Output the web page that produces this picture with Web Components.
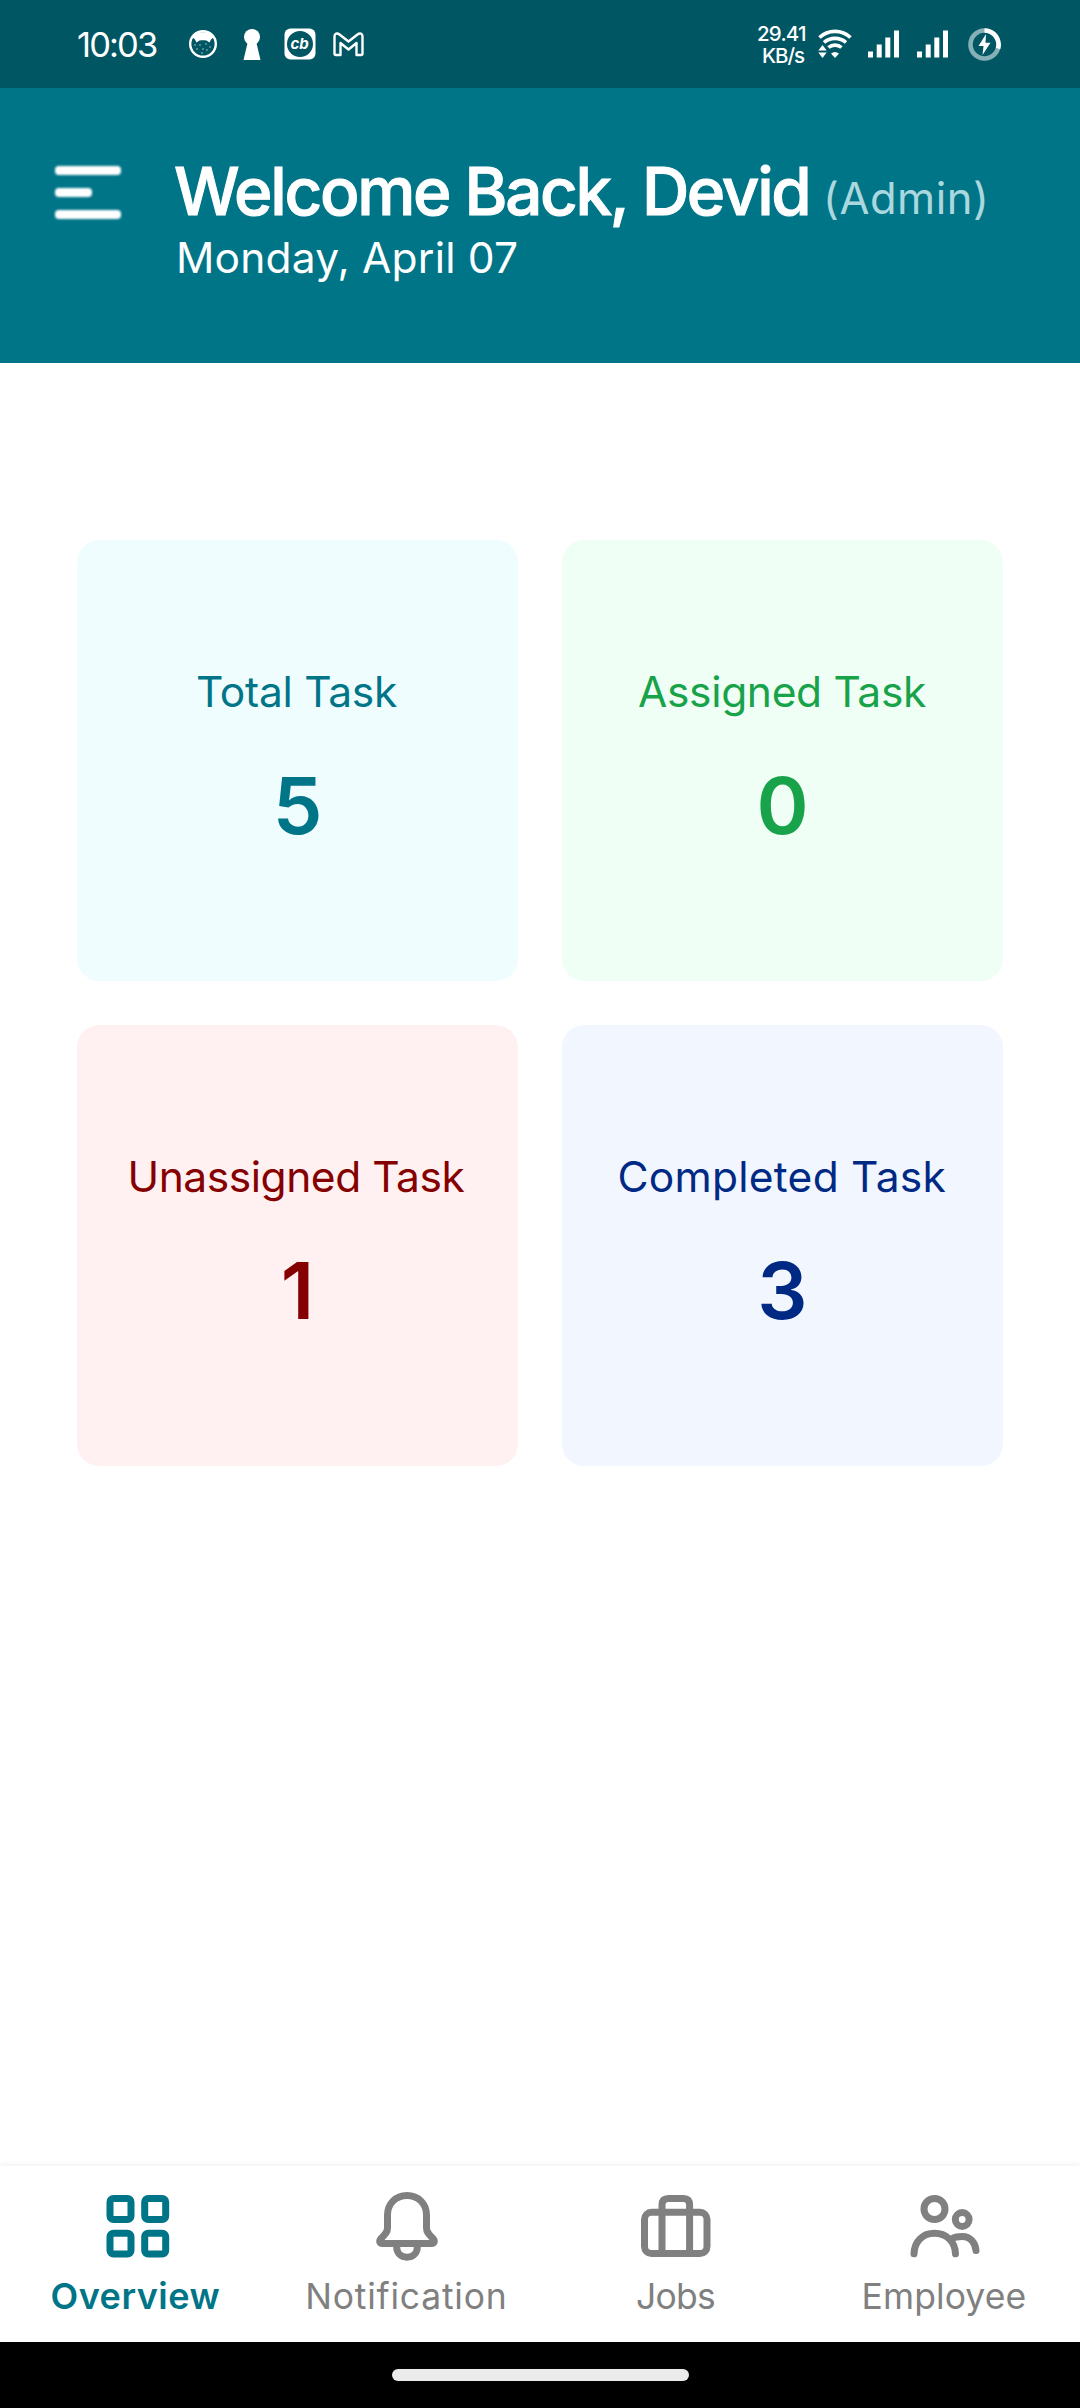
<!DOCTYPE html>
<html lang="en">
<head>
<meta charset="utf-8">
<title>Overview</title>
<style>
  html, body { margin: 0; background: #fff; font-family: Inter, "Open Sans", sans-serif; }
</style>
</head>
<body>
<app-screen>
  <status-bar slot="status"></status-bar>
  <welcome-header slot="header" name="Devid" role-name="(Admin)" date="Monday, April 07"></welcome-header>
  <task-card label="Total Task" ink="199" value="5" style="--bg:#f0fdff;--fg:#007588"></task-card>
  <task-card label="Assigned Task" ink="287" value="0" style="--bg:#f0fff5;--fg:#18a34b"></task-card>
  <task-card label="Unassigned Task" ink="334" value="1" style="--bg:#fff1f2;--fg:#850000"></task-card>
  <task-card label="Completed Task" ink="326" value="3" style="--bg:#f1f6ff;--fg:#002984"></task-card>
  <nav-bar slot="nav">
    <nav-tab active>
      <svg slot="icon" width="80" height="80" viewBox="0 0 80 80" fill="none" stroke="currentColor" stroke-width="7"><rect x="12" y="12.500" width="21" height="21" rx="3.500"/><rect x="46.700" y="12.500" width="21" height="21" rx="3.500"/><rect x="12" y="47.300" width="21" height="20.700" rx="3.500"/><rect x="46.700" y="47.300" width="21" height="20.700" rx="3.500"/></svg>
      <fit-text size="36" weight="600" ink="168" line="44">Overview</fit-text>
    </nav-tab>
    <nav-tab>
      <svg slot="icon" width="80" height="80" viewBox="0 0 80 80" fill="none" stroke="currentColor" stroke-width="7" stroke-linejoin="round"><path d="M40 9.500C28.500 9.500 20.500 18 20.500 29V42C20.500 46 18.500 48 15 51.500C13.500 53 12.500 54 12.700 55.500C13 57 14 57.500 15.500 57.500H64.500C66 57.500 67 57 67.300 55.500C67.500 54 66.500 53 65 51.500C61.500 48 59.500 46 59.500 42V29C59.500 18 51.500 9.500 40 9.500Z"/><path d="M29.700 58V61C29.700 67 34 71.200 40 71.200S50.300 67 50.300 61V58"/></svg>
      <fit-text size="35.500" weight="400" ink="196.500" line="44">Notification</fit-text>
    </nav-tab>
    <nav-tab>
      <svg slot="icon" width="80" height="80" viewBox="0 0 80 80" fill="none" stroke="currentColor" stroke-width="7"><rect x="8.500" y="26.300" width="62.500" height="41.200" rx="7"/><path d="M26 67.500V19Q26 12.500 32.500 12.500H47.500Q53.600 12.500 53.600 19V67.500"/></svg>
      <fit-text size="35.500" weight="400" ink="77" line="44">Jobs</fit-text>
    </nav-tab>
    <nav-tab>
      <svg slot="icon" width="80" height="80" viewBox="0 0 80 80" fill="none" stroke="currentColor" stroke-width="7" stroke-linecap="round"><circle cx="29.500" cy="23" r="10.500"/><circle cx="57.200" cy="33.500" r="6.900"/><path d="M9 67.800C9.500 55 18 47.300 29.500 47.300S50 55 50.500 67.800"/><path d="M46.500 53C49 51.200 53 50.500 57.200 50.500C65.500 50.500 70.300 57 71 64.500"/></svg>
      <fit-text size="35.500" weight="400" ink="160" line="44">Employee</fit-text>
    </nav-tab>
  </nav-bar>
  <gesture-bar slot="gesture"></gesture-bar>
</app-screen>

<script>
const pen = document.createElement('canvas').getContext('2d');

class Base extends HTMLElement {
  connectedCallback() {
    if (!this.shadowRoot) this.attachShadow({ mode: 'open' });
    this.shadowRoot.innerHTML = this.view();
  }
}

/* Spreads its glyphs so that the drawn text spans exactly "ink" pixels. */
customElements.define('fit-text', class extends Base {
  view() {
    const a = n => parseFloat(this.getAttribute(n));
    const text = this.textContent.trim(), size = a('size'), weight = this.getAttribute('weight') || '400';
    pen.font = `${weight} ${size}px Inter, "Open Sans", sans-serif`;
    const m = pen.measureText(text);
    const natural = m.actualBoundingBoxLeft + m.actualBoundingBoxRight;
    const gap = (a('ink') - natural) / Math.max(1, text.length - 1);
    return `<style>:host{display:block;flex:none;width:${a('ink')}px;line-height:${a('line')}px;font-size:${size}px;font-weight:${weight};letter-spacing:${gap.toFixed(3)}px;text-indent:${m.actualBoundingBoxLeft.toFixed(2)}px;white-space:nowrap}</style><slot></slot>`;
  }
});

customElements.define('app-screen', class extends Base {
  view() {
    return `<style>
      :host{display:flex;flex-direction:column;width:1080px;height:2408px;background:#fff;overflow:hidden}
      main{flex:1;padding:177px 77px 0;display:grid;grid-template-columns:441px 441px;grid-auto-rows:441px;gap:44px;align-content:start}
    </style>
    <slot name="status"></slot><slot name="header"></slot>
    <main><slot></slot></main>
    <slot name="nav"></slot><slot name="gesture"></slot>`;
  }
});

customElements.define('status-bar', class extends Base {
  view() {
    const bars = '<svg width="31" height="28" viewBox="0 0 31 28" fill="#fff"><path d="M0 21.500h5v6h-5zM8.700 14.500h5v13h-5zM17.300 7.500h5v20h-5zM26 .500h5v27h-5z"/></svg>';
    return `<style>
      :host{display:flex;box-sizing:border-box;height:88px;background:#005663;color:#fff;padding:0 78px}
      .left,.right{display:flex;align-items:center}
      .right{margin-left:auto}
      svg{display:block;flex:none}
      .rate{display:flex;flex-direction:column;align-items:flex-end;margin:1px 13px 0 0}
    </style>
    <div class="left">
      <fit-text size="34.500" weight="400" ink="79" line="46" style="margin:2px 32px 0 0">10:03</fit-text>
      <svg width="28" height="28" viewBox="0 0 28 28"><circle cx="14" cy="14" r="12.800" fill="none" stroke="#fff" stroke-width="2.400"/><path d="M3 7C8 .500 20 .500 25 7L22 9.500L20.500 12.500L17.500 10.500C15 10 13 10 10.500 10.500L7.500 12.500L6 9.500Z" fill="#fff"/><g fill="#a9cbd0"><circle cx="6" cy="15" r=".8"/><circle cx="11" cy="15" r=".8"/><circle cx="17" cy="14" r=".8"/><circle cx="21" cy="17" r=".8"/><circle cx="8" cy="19" r=".8"/><circle cx="14" cy="19" r=".8"/><circle cx="18" cy="20" r=".8"/><circle cx="13" cy="23" r=".8"/></g></svg>
      <svg width="18" height="31" viewBox="0 0 18 31" style="margin-left:26px" fill="#fff"><circle cx="9" cy="8" r="8"/><path d="M5 12H13L17.500 31H.500Z"/></svg>
      <svg width="32" height="32" viewBox="0 0 32 32" style="margin-left:23px"><rect x=".5" y=".5" width="31" height="31" rx="6" fill="#fff"/><circle cx="16" cy="16" r="13" fill="#005663"/><text x="15.700" y="21" text-anchor="middle" font-family="Inter, sans-serif" font-size="15" font-weight="700" font-style="italic" fill="#fff">cb</text></svg>
      <svg width="31" height="25" viewBox="0 0 31 25" style="margin-left:17px" fill="none" stroke="#fff" stroke-width="2.400" stroke-linejoin="round"><path d="M1.500 4.500C1.500 1.500 4 .500 6.500 2.500L15.500 9.500L24.500 2.500C27 .500 29.500 1.500 29.500 4.500V21.500Q29.500 23 28 23H23.500V11L15.500 17.500L7.500 11V23H3Q1.500 23 1.500 21.500Z"/></svg>
    </div>
    <div class="right">
      <div class="rate">
        <fit-text size="20.500" weight="500" ink="47" line="22">29.41</fit-text>
        <fit-text size="20.500" weight="500" ink="42" line="22">KB/s</fit-text>
      </div>
      <svg width="34" height="30" viewBox="0 0 34 30" fill="none" stroke="#fff" stroke-width="3.600"><path d="M1.500 8.500C10 .300 24 .300 32.500 8.500"/><path d="M6 13.500C12 8 22 8 28 13.500"/><path d="M10.500 18.500C14 15.300 20 15.300 23.500 18.500"/><g fill="#fff" stroke="none"><path d="M13 24.500Q17 21.500 21 24.500L17 29Z"/><path d="M4.500 16L8.700 21.500H.300ZM4.500 29L.300 23.500H8.700Z"/></g></svg>
      <span style="margin-left:16px">${bars}</span>
      <span style="margin-left:18px">${bars}</span>
      <svg width="33" height="33" viewBox="0 0 33 33" style="margin:0 1px 0 20px"><circle cx="16.500" cy="16.500" r="14" fill="none" stroke="#86b0b7" stroke-width="4.600"/><path d="M16.500 2.500A14 14 0 0 1 30 20.500" fill="none" stroke="#fff" stroke-width="4.600"/><path d="M18 6L10.500 18H15.500L14.500 27L22.500 14.800H17.500Z" fill="#fff"/></svg>
    </div>`;
  }
});

customElements.define('welcome-header', class extends Base {
  view() {
    return `<style>
      :host{display:flex;box-sizing:border-box;height:275px;background:#007588;color:#fff;padding:64px 55px 0}
      .menu{display:flex;flex-direction:column;gap:13px;margin:14px 54px 0 0;width:66px;filter:blur(.8px)}
      .menu i{height:9px;border-radius:4px;background:#fff}
      .menu i:nth-child(2){width:37px}
      .line{display:flex;align-items:center}
    </style>
    <div class="menu"><i></i><i></i><i></i></div>
    <div>
      <div class="line">
        <fit-text size="65.500" weight="500" ink="633" line="80" style="-webkit-text-stroke:1px #fff">Welcome Back, ${this.getAttribute('name')}</fit-text>
        <fit-text size="43.500" weight="400" ink="158" line="60" style="color:#abd7de;margin:12px 0 0 19px">${this.getAttribute('role-name')}</fit-text>
      </div>
      <fit-text size="42.500" weight="400" ink="338" line="52" style="margin-left:4px">${this.getAttribute('date')}</fit-text>
    </div>`;
  }
});

customElements.define('task-card', class extends Base {
  view() {
    return `<style>
      :host{display:flex;flex-direction:column;align-items:center;box-sizing:border-box;padding-top:122px;background:var(--bg);color:var(--fg);border-radius:22px}
      b{font-size:79px;font-weight:600;line-height:90px;margin-top:38px}
    </style>
    <fit-text size="42.500" weight="400" ink="${this.getAttribute('ink')}" line="60">${this.getAttribute('label')}</fit-text>
    <b>${this.getAttribute('value')}</b>`;
  }
});

customElements.define('nav-bar', class extends Base {
  view() {
    return `<style>:host{display:grid;grid-template-columns:repeat(4,269px);flex:none;height:176px;padding-left:3px;background:#fff;box-shadow:0 -1px 6px rgba(0,0,0,.07)}</style><slot></slot>`;
  }
});

customElements.define('nav-tab', class extends Base {
  view() {
    return `<style>
      :host{display:flex;flex-direction:column;align-items:center;box-sizing:border-box;padding-top:20px;color:#808080}
      :host([active]){color:#007588}
      .label{margin-top:9px}
      :host([active]) .label{margin:8px 4px 0 0}
      ::slotted(svg){display:block}
    </style>
    <slot name="icon"></slot><div class="label"><slot></slot></div>`;
  }
});

customElements.define('gesture-bar', class extends Base {
  view() {
    return `<style>:host{display:flex;flex:none;height:66px;background:#000;justify-content:center;align-items:center}i{width:297px;height:12px;border-radius:6px;background:#ebebeb}</style><i></i>`;
  }
});
</script>
</body>
</html>
